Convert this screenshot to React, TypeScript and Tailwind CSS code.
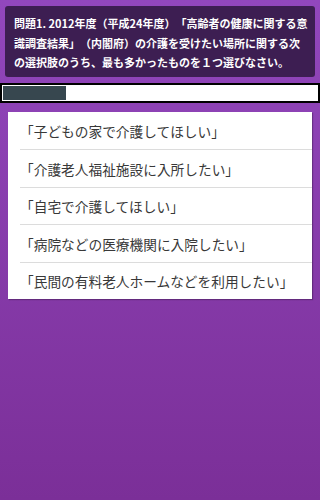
const choices = [
  "「子どもの家で介護してほしい」",
  "「介護老人福祉施設に入所したい」",
  "「自宅で介護してほしい」",
  "「病院などの医療機関に入院したい」",
  "「民間の有料老人ホームなどを利用したい」",
];

export default function App() {
  return (
    <div
      className="min-h-screen bg-gradient-to-b from-[#9247bd] to-[#7b2f98] pt-[6px] overflow-hidden [text-spacing-trim:space-all]"
      style={{ fontFamily: '"Noto Sans CJK JP", "Noto Sans", sans-serif' }}
    >
      {/* question */}
      <div className="mx-[5px] rounded-[3px] bg-[#3d1e52] pl-[9px] pr-[6px] pt-[8px] pb-[4px] text-[11px] font-bold leading-[19.5px] text-white">
        問題1. 2012年度（平成24年度）「高齢者の健康に関する意識調査結果」（内閣府）の介護を受けたい場所に関する次の選択肢のうち、最も多かったものを１つ選びなさい。
      </div>

      {/* progress */}
      <div className="mt-[6px] h-[20px] border-2 border-black bg-white p-px">
        <div className="h-full w-[63px] bg-[#37474f]" />
      </div>

      {/* choices */}
      <div className="mx-2 mt-[9px] bg-white pl-3 shadow-[1px_1px_1px_rgba(0,0,0,0.25)]">
        {choices.map((c, i) => (
          <div
            key={i}
            className={`flex h-[37.5px] items-center pt-[2px] text-[13.7px] text-[#383838] ${
              i > 0 ? "border-t border-[#dcdcdc]" : ""
            }`}
          >
            {c}
          </div>
        ))}
      </div>
    </div>
  );
}
